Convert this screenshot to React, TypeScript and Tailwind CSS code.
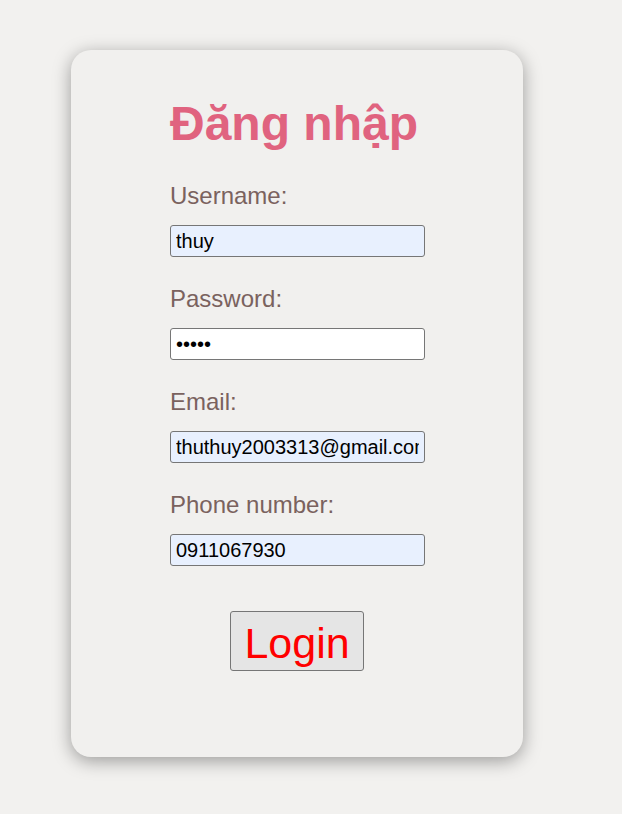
function Field({
  label,
  value,
  type = "text",
  filled = true,
}: {
  label: string;
  value: string;
  type?: string;
  filled?: boolean;
}) {
  return (
    <>
      <label className="mt-[28px] block text-[24px] leading-[27px] text-[#7a625e]">
        {label}
      </label>
      <input
        type={type}
        defaultValue={value}
        readOnly
        className={`mt-[16px] h-[32px] w-[255px] rounded-[3px] border border-[#767676] px-[5px] text-[20px] text-black outline-none ${
          filled ? "bg-[#e8f0fe]" : "bg-white"
        }`}
      />
    </>
  );
}

export default function App() {
  return (
    <div
      className="min-h-[814px] bg-[#f2f1ef] pt-[50px] pl-[71px]"
      style={{ fontFamily: '"Liberation Sans", Arial, sans-serif' }}
    >
      <div className="w-[452px] rounded-[20px] bg-[#f1f0ee] pt-[46px] pb-[86px] shadow-[0_4px_18px_rgba(0,0,0,0.36)]">
        <div className="ml-[99px] flex w-[255px] flex-col">
          <h1 className="text-[48px] font-bold leading-[55px] text-[#e0637f]">
            Đăng nhập
          </h1>
          <label className="mt-[31px] block text-[24px] leading-[27px] text-[#7a625e]">
            Username:
          </label>
          <input
            type="text"
            defaultValue="thuy"
            readOnly
            className="mt-[16px] h-[32px] w-[255px] rounded-[3px] border border-[#767676] bg-[#e8f0fe] px-[5px] text-[20px] text-black outline-none"
          />
          <Field label="Password:" value="12345" type="password" filled={false} />
          <Field label="Email:" value="thuthuy2003313@gmail.com" />
          <Field label="Phone number:" value="0911067930" />
          <button className="mt-[45px] ml-[60px] h-[60px] w-[134px] self-start rounded-[3px] border border-[#767676] bg-[#e5e5e5] pt-[3px] text-[43px] leading-[50px] text-[#ff0000]">
            Login
          </button>
        </div>
      </div>
    </div>
  );
}
